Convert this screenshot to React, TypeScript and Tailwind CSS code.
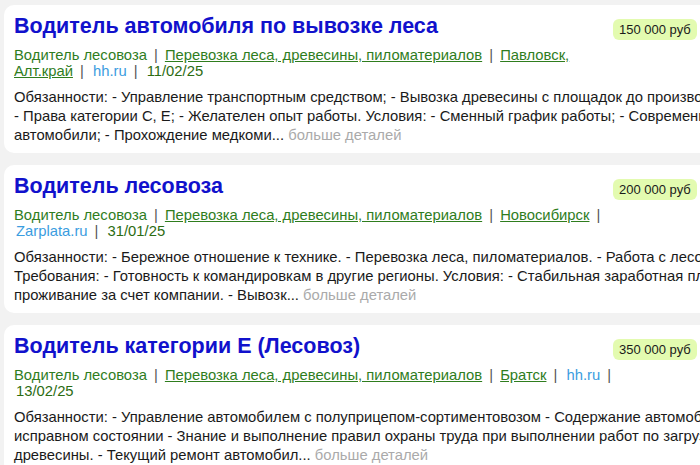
import React from "react";

type Job = {
  title: string;
  salary: string;
  category: string;
  city: string;
  source: string;
  date: string;
  lines: string[];
  tail: string;
};

const jobs: Job[] = [
  {
    title: "Водитель автомобиля по вывозке леса",
    salary: "150 000 руб",
    category: "Водитель лесовоза",
    city: "Павловск, Алт.край",
    source: "hh.ru",
    date: "11/02/25",
    lines: [
      "Обязанности: - Управление транспортным средством; - Вывозка древесины с площадок до производства. Требования:",
      "- Права категории С, Е; - Желателен опыт работы. Условия: - Сменный график работы; - Современные",
    ],
    tail: "автомобили; - Прохождение медкоми...",
  },
  {
    title: "Водитель лесовоза",
    salary: "200 000 руб",
    category: "Водитель лесовоза",
    city: "Новосибирск",
    source: "Zarplata.ru",
    date: "31/01/25",
    lines: [
      "Обязанности: - Бережное отношение к технике. - Перевозка леса, пиломатериалов. - Работа с лесовозом.",
      "Требования: - Готовность к командировкам в другие регионы. Условия: - Стабильная заработная плата",
    ],
    tail: "проживание за счет компании. - Вывозк...",
  },
  {
    title: "Водитель категории Е (Лесовоз)",
    salary: "350 000 руб",
    category: "Водитель лесовоза",
    city: "Братск",
    source: "hh.ru",
    date: "13/02/25",
    lines: [
      "Обязанности: - Управление автомобилем с полуприцепом-сортиментовозом - Содержание автомобиля в",
      "исправном состоянии - Знание и выполнение правил охраны труда при выполнении работ по загрузке",
    ],
    tail: "древесины. - Текущий ремонт автомобил...",
  },
];

// bar sticks to the item before it, the space after it lets the line break
const Sep = () => (
  <>
    <span className="ml-[7px] mr-[3px] text-[#555]">|</span>{" "}
  </>
);

const JobCard = ({ job }: { job: Job }) => {
  return (
    <div className="w-[1000px] shrink-0 bg-white rounded-[10px] pl-[10px] pt-[8px] pb-[8px]">
      <div className="flex items-start">
        <div className="w-[602px] shrink-0">
          <h2 className="text-[21.5px] leading-[26px] font-bold text-[#1111cc]">{job.title}</h2>
          <div className="mt-[8px] text-[14.8px] leading-[16px] text-[#2f7d1e]">
            <span>{job.category}</span>
            <Sep />
            <a className="underline">Перевозка леса, древесины, пиломатериалов</a>
            <Sep />
            <a className="underline">{job.city}</a>
            <Sep />
            <span className="pl-[2px] text-[#3b9de0]">{job.source}</span>
            <Sep />
            <span className="pl-[2px] text-[#2c6c12]">{job.date}</span>
          </div>
        </div>
        <div className="-ml-[3px] mt-[6px] flex items-start">
          <span className="h-[21px] px-[6px] flex items-center rounded-[6px] bg-[#e3fbb0] text-[13px] text-[#1a1a1a]">
            {job.salary}
          </span>
          <svg className="ml-[3px] mt-[3px]" width="12" height="12" viewBox="0 0 12 12">
            <circle cx="5" cy="4" r="3.5" fill="#e8902a" />
          </svg>
        </div>
      </div>
      <div className="mt-[9px] text-[14.8px] leading-[19px] text-[#1a1a1a] whitespace-nowrap">
        {job.lines.map((l, i) => (
          <div key={i}>{l}</div>
        ))}
        <div>
          {job.tail} <span className="text-[#aaaaaa]">больше деталей</span>
        </div>
      </div>
    </div>
  );
};

const App = () => {
  return (
    <div
      className="w-[700px] h-[465px] overflow-hidden bg-[#f2f2f2] pl-[4px] pt-[5px] flex flex-col gap-[12px]"
      style={{ fontFamily: '"Liberation Sans", Arial, sans-serif' }}
    >
      {jobs.map((job, i) => (
        <JobCard key={i} job={job} />
      ))}
    </div>
  );
};

export default App;
